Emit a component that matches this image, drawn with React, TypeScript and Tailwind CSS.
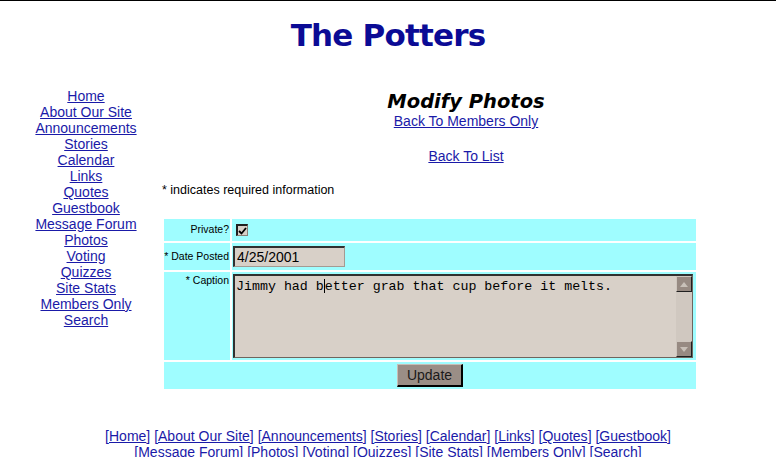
import React from "react";

const navLinks = [
  "Home",
  "About Our Site",
  "Announcements",
  "Stories",
  "Calendar",
  "Links",
  "Quotes",
  "Guestbook",
  "Message Forum",
  "Photos",
  "Voting",
  "Quizzes",
  "Site Stats",
  "Members Only",
  "Search",
];

const footerRow1 = navLinks.slice(0, 8);
const footerRow2 = navLinks.slice(8);

function FooterRow({ items }: { items: string[] }) {
  return (
    <div className="text-center leading-[16px]">
      {items.map((item, i) => (
        <span key={item}>
          [<a href="#" className="underline">{item}</a>]{i < items.length - 1 ? " " : ""}
        </span>
      ))}
    </div>
  );
}

export default function App() {
  return (
    <div
      className="min-h-[457px] bg-white border-t border-black text-black"
      style={{ fontFamily: '"Liberation Sans", Arial, sans-serif' }}
    >
      <h1
        className="pt-[16px] text-center text-[31px] leading-[36px] font-bold tracking-[-0.8px] text-[#0b0b95]"
        style={{ fontFamily: '"DejaVu Sans", Verdana, sans-serif' }}
      >
        The Potters
      </h1>

      <div className="mt-[35px] flex">
        {/* side nav */}
        <nav className="w-[160px] pl-[12px] flex flex-col items-center text-[14px] leading-[16px] text-[#1a1aa8]">
          {navLinks.map((l) => (
            <a key={l} href="#" className="underline">
              {l}
            </a>
          ))}
        </nav>

        <main className="w-[612px] pt-[3px]">
          <h2
            className="text-center text-[19.5px] leading-[22px] font-bold italic"
            style={{ fontFamily: '"DejaVu Sans", Verdana, sans-serif' }}
          >
            Modify Photos
          </h2>
          <div className="text-center text-[14px] leading-[16px] text-[#1a1aa8]">
            <a href="#" className="underline">Back To Members Only</a>
          </div>
          <div className="mt-[19px] text-center text-[14px] leading-[16px] text-[#1a1aa8]">
            <a href="#" className="underline">Back To List</a>
          </div>
          <p className="mt-[19px] pl-[2px] text-[12.5px] leading-[14px]">* indicates required information</p>

          <table className="mt-[20px] ml-[2px] w-[536px] table-fixed border-separate border-spacing-[2px] text-[10.5px]">
            <colgroup>
              <col className="w-[66px]" />
              <col />
            </colgroup>
            <tbody>
              <tr>
                <td className="h-[22px] bg-[#9ffdff] pr-[1px] text-right align-middle">Private?</td>
                <td className="h-[22px] bg-[#9ffdff] pl-[4px] align-middle">
                  <span className="flex h-[12px] w-[12px] items-center justify-center border-t-2 border-l-2 border-b border-r border-t-[#202020] border-l-[#202020] border-b-[#8a8078] border-r-[#8a8078] bg-[#d8d0c8]">
                    <svg width="9" height="8" viewBox="0 0 9 8">
                      <path d="M1 4 L3.5 6.5 L8 1" stroke="#000" strokeWidth="1.8" fill="none" />
                    </svg>
                  </span>
                </td>
              </tr>
              <tr>
                <td className="h-[27px] bg-[#9ffdff] pr-[1px] text-right align-middle whitespace-nowrap">* Date Posted</td>
                <td className="h-[27px] bg-[#9ffdff] pl-[1px] align-middle">
                  <input
                    readOnly
                    defaultValue="4/25/2001"
                    className="block h-[21px] w-[112px] border-t-2 border-l-2 border-b border-r border-t-[#303030] border-l-[#303030] border-b-[#a49a92] border-r-[#a49a92] bg-[#d8d0c8] px-[2px] text-[14px] text-black outline-none"
                    style={{ fontFamily: '"Liberation Sans", Arial, sans-serif' }}
                  />
                </td>
              </tr>
              <tr>
                <td className="h-[88px] bg-[#9ffdff] pr-[1px] pt-[1px] text-right align-top">* Caption</td>
                <td className="h-[88px] bg-[#9ffdff] pl-[1px] pt-[2px] align-top">
                  <div className="flex h-[84px] w-[460px] border-t-2 border-l-2 border-b border-r border-t-[#303030] border-l-[#303030] border-b-[#6f655e] border-r-[#6f655e] bg-[#d8d0c8]">
                    <div
                      className="flex-1 pl-[1px] pt-[3px] text-[13.3px] leading-[16px] whitespace-pre"
                      style={{ fontFamily: '"Liberation Mono", "Courier New", monospace' }}
                    >
                      Jimmy had b<span className="inline-block h-[14px] w-0 border-l border-black align-middle" />etter grab that cup before it melts.
                    </div>
                    <div className="flex w-[16px] flex-col bg-[#d0c8c0]">
                      <div className="flex h-[16px] items-center justify-center border border-t-[#cfc7bf] border-l-[#cfc7bf] border-b-[#202020] border-r-[#202020] bg-[#978a82]">
                        <svg width="8" height="5" viewBox="0 0 8 5">
                          <path d="M4 0 L8 5 L0 5 Z" fill="#c8c0b8" />
                        </svg>
                      </div>
                      <div className="flex-1" />
                      <div className="flex h-[16px] items-center justify-center border border-t-[#cfc7bf] border-l-[#cfc7bf] border-b-[#202020] border-r-[#202020] bg-[#978a82]">
                        <svg width="8" height="5" viewBox="0 0 8 5">
                          <path d="M0 0 L8 0 L4 5 Z" fill="#c8c0b8" />
                        </svg>
                      </div>
                    </div>
                  </div>
                </td>
              </tr>
              <tr>
                <td colSpan={2} className="h-[27px] bg-[#9ffdff] text-center align-middle">
                  <button className="h-[23px] w-[66px] border border-b-2 border-r-2 border-t-[#c8beb6] border-l-[#c8beb6] border-b-black border-r-black bg-[#9a8e86] text-[14px] text-[#1a1a1a]">
                    Update
                  </button>
                </td>
              </tr>
            </tbody>
          </table>
        </main>
      </div>

      <footer className="mt-[37px] text-[14px] text-[#1a1aa8]">
        <FooterRow items={footerRow1} />
        <FooterRow items={footerRow2} />
      </footer>
    </div>
  );
}
